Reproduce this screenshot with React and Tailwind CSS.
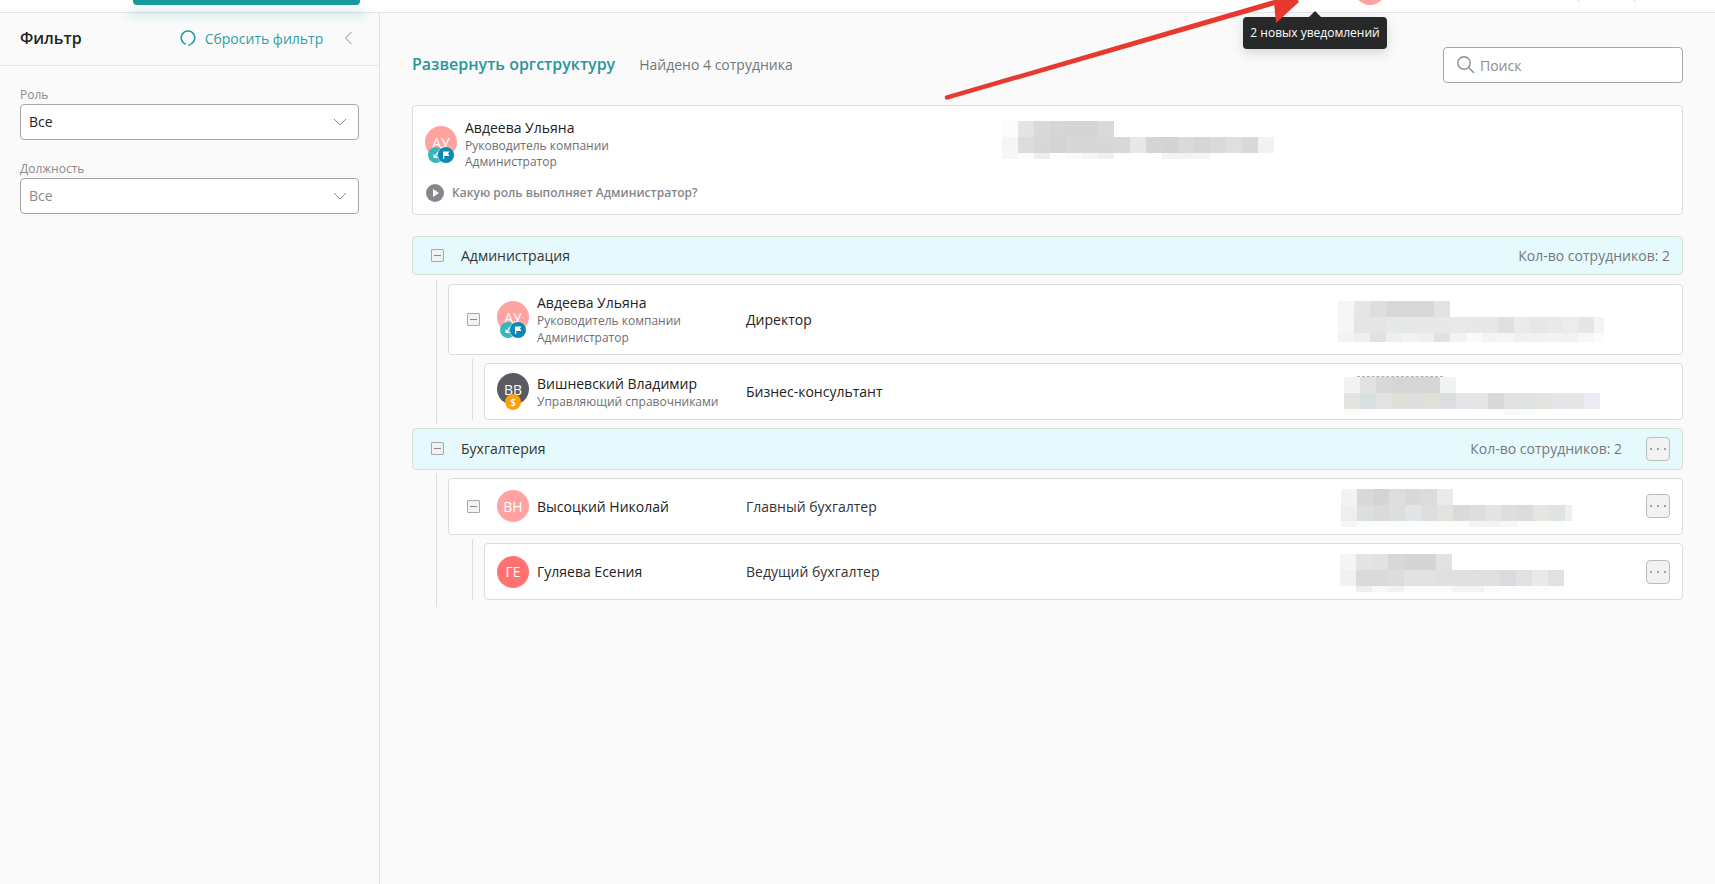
import React from "react";

const Minus = () => (
  <span className="flex h-[13px] w-[13px] shrink-0 items-center justify-center rounded-[1px] border border-[#a9a9a9] bg-[#f2f2f2]">
    <span className="h-px w-[7px] bg-[#8a8a8a]" />
  </span>
);

const Dots = () => (
  <span className="flex h-[24px] w-[24px] shrink-0 items-center justify-center gap-[5px] rounded border border-[#bdbdbd] bg-[#f2f2f2]">
    <span className="h-[2px] w-[2px] rounded-full bg-[#888]" />
    <span className="h-[2px] w-[2px] rounded-full bg-[#888]" />
    <span className="h-[2px] w-[2px] rounded-full bg-[#888]" />
  </span>
);

const Chevron = () => (
  <svg width="14" height="8" viewBox="0 0 14 8" fill="none" stroke="#8c8c8c" strokeWidth="1">
    <path d="M1 1l6 6 6-6" />
  </svg>
);

const TeamBadges = () => (
  <span className="absolute left-[3px] top-[21px] flex">
    <span className="flex h-[16px] w-[16px] items-center justify-center rounded-full bg-[#3ab5bd]">
      <svg width="10" height="10" viewBox="0 0 10 10" fill="#fff">
        <path d="M7.5 2.5L5 5.5 7 8H2.5V4l1.4 1.4 2.4-3.4z" />
      </svg>
    </span>
    <span className="-ml-[6px] flex h-[16px] w-[16px] items-center justify-center rounded-full bg-[#0d87b3] ring-1 ring-white/40">
      <svg width="10" height="10" viewBox="0 0 10 10" fill="#fff">
        <path d="M2 1.5h6.5L7 3.7l1.5 2.2H3.2V9H2z" />
      </svg>
    </span>
  </span>
);

const DollarBadge = () => (
  <span className="absolute left-[8px] top-[21px] flex h-[16px] w-[16px] items-center justify-center rounded-full bg-[#ff9f0a] text-[10px] font-semibold leading-none text-white">
    $
  </span>
);

const Avatar = ({ text, color, badge }) => (
  <span className={`relative flex h-[32px] w-[32px] shrink-0 items-center justify-center rounded-full text-[14px] text-white ${color}`}>
    {text}
    {badge === "team" && <TeamBadges />}
    {badge === "dollar" && <DollarBadge />}
  </span>
);

const Mosaic = ({ rows, className, width, thin = 6, children }) => (
  <div className={`flex flex-col overflow-hidden ${className}`} style={{ width }}>
    {children}
    {rows.map((r, i) => (
      <div key={i} className="flex shrink-0" style={{ height: r.thin ? thin : 16 }}>
        {r.cells.map((c, j) => (
          <span key={j} className="h-full w-[16px] shrink-0" style={{ backgroundColor: c }} />
        ))}
      </div>
    ))}
  </div>
);

const top1 = [
  { cells: ["#fcfcfb", "#e4e4e4", "#d9d9d9", "#d6d6d6", "#d4d5d4", "#d4d5d4", "#d9dada"] },
  { cells: ["#f6f6f5", "#dcdcdc", "#d8d6d8", "#d6d3d7", "#d9d6d8", "#d6d7d6", "#d7d7d7", "#d8d8d8", "#e8e8e8", "#d5d5d5", "#d3d3d3", "#dadada", "#d5d6d7", "#dadada", "#dde0e2", "#d9d9d9", "#f2f2f2"] },
  { thin: true, cells: ["#f5f7f7", "#fbfbfb", "#eeeeee", "#ffffff", "#fbfbf8", "#f4f6f5", "#eff0f0", "#ffffff", "#ffffff", "#ffffff", "#f4f4f4", "#f3f3f3", "#f6f6f6"] },
];
const m1 = [
  { cells: ["#f7f6f5", "#e6e6e4", "#dedede", "#d8d8d8", "#d8d8da", "#d8d8da", "#e3e3e5"] },
  { cells: ["#f7f6f5", "#e4e6e6", "#e5e5e3", "#e5e9e8", "#e6e9e7", "#e7e8e8", "#e6e8ea", "#eae9e8", "#e9e7e8", "#e6e7e7", "#dfe0e2", "#ebebec", "#e6e8e8", "#e8e9e8", "#edecea", "#e5e6e6", "#f3f4f5"] },
  { thin: true, cells: ["#f3f3f1", "#efefef", "#e1e1e1", "#eeeeee", "#f2f2f0", "#eef0f0", "#e2e2e2", "#f2f2f2", "#fbf9f9", "#f4f4f4", "#f4f5f4", "#eff0ef", "#f1f1f1", "#f3f3f2", "#f0f1f1", "#f7f7f7", "#fbfbfb"] },
];
const m2 = [
  { cells: ["#f3f3f3", "#e2e2e2", "#d8d8d8", "#d6d6d6", "#d6d6d6", "#d6d6d6", "#f1f3f3"] },
  { cells: ["#e4e5e1", "#d9dee1", "#e2e3e2", "#dddfd9", "#dcdee0", "#e0dfda", "#dcdee2", "#e6e4e8", "#e5e4e7", "#d8d8d8", "#e1e3e2", "#dfe3e1", "#e3e3e0", "#e6e5e9", "#e6e7e4", "#ebebf1"] },
  { thin: true, cells: ["#fbfbfb", "#ffffff", "#ffffff", "#ffffff", "#ffffff", "#ffffff", "#ffffff", "#ffffff", "#ffffff", "#ffffff", "#f8f8f8", "#fafafa"] },
];
const m3 = [
  { cells: ["#f3f3f3", "#d9d9d9", "#d4d4d4", "#dedede", "#d9d9d9", "#dcdcdc", "#ebebeb"] },
  { cells: ["#eeeeec", "#dbdfde", "#dcd9da", "#dcdfe0", "#e0e6e8", "#dfdedc", "#e3e3df", "#dadada", "#dddee0", "#e3e4e4", "#dddee0", "#dcdcde", "#e6e5e2", "#e0e3e3", "#ededf2"] },
  { thin: true, cells: ["#f6f6f6", "#fbfbfb", "#fbfbfb", "#fbfbfb", "#fcfcfc", "#fcfcfc", "#fcfcfc", "#fcfcfc", "#f4f4f5", "#f3f3f4", "#f7f7f9", "#fcfcfc", "#fcfcfc", "#fdfdfd"] },
];
const m4 = [
  { cells: ["#f4f5f4", "#e4e4e2", "#e2e2e2", "#d8d8d8", "#d5d5d5", "#d5d5d5", "#e1e2e4"] },
  { cells: ["#f0f1f0", "#dbd9da", "#dadada", "#dcdcdc", "#e0e2e4", "#e3e2df", "#dfe0e1", "#e0e0df", "#dfdfde", "#e0e0df", "#dadae0", "#e1e1e3", "#e8e9e9", "#e1e1e1"] },
  { thin: true, cells: ["#ffffff", "#efefef", "#f8f8f8", "#f3f3f3", "#fbfbfb", "#fbfbfb", "#fbfbfb", "#f4f4f4", "#f3f3f5", "#fbfbfb", "#fcfcfc", "#fcfcfc", "#fcfcfc", "#fdfdfd"] },
];

const Person = ({ name, subs, lastCls = "leading-[17px]" }) => (
  <div className="flex flex-col">
    <span className="text-[14px] leading-[19px] text-[#222]">{name}</span>
    {subs.map((s, i) => (
      <span key={s} className={`text-[12px] text-[#6e6e73] ${i === subs.length - 1 ? lastCls : "leading-[17px]"}`}>{s}</span>
    ))}
  </div>
);

const GroupHead = ({ title, heightCls, withDots }) => (
  <div className={`flex items-center rounded border border-[#d9dddd] bg-[#e6fafe] pl-[18px] pr-[12px] ${heightCls}`}>
    <Minus />
    <span className="ml-[17px] text-[14px] text-[#333]">{title}</span>
    <span className={`ml-auto text-[14px] text-[#77787c] ${withDots ? "mr-[24px]" : ""}`}>Кол-во сотрудников: 2</span>
    {withDots && <Dots />}
  </div>
);

export default function App() {
  return (
    <div className="relative flex h-[884px] w-full flex-col overflow-hidden bg-[#fafafa] font-['Open_Sans',sans-serif]">
      <header className="flex h-[13px] shrink-0 items-start overflow-hidden border-b border-[#e4e4e4] bg-white">
        <div className="ml-[133px] h-[5px] w-[227px] rounded-b bg-[#179a9c]" />
        <div className="ml-[994px] -mt-[27px] h-[32px] w-[32px] shrink-0 rounded-full bg-[#ffa3a1]" />
        <div className="ml-[192px] h-[2px] w-px bg-[#dcdcdc]" />
        <div className="ml-[55px] h-[2px] w-px bg-[#dcdcdc]" />
      </header>
      <div className="h-0 shrink-0">
        <div className="ml-[128px] h-[8px] w-[237px] -translate-y-[4px] bg-[#179a9c]/15 blur-[4px]" />
      </div>

      <div className="flex min-h-0 flex-1">
        <aside className="w-[380px] shrink-0 border-r border-[#e0e0e0]">
          <div className="flex h-[53px] items-center border-b border-[#e6e6e6] pb-[2px] pl-[20px] pr-[24px]">
            <span className="text-[16px] font-semibold text-[#222]">Фильтр</span>
            <svg className="ml-[98px]" width="16" height="16" viewBox="0 0 16 16" fill="none" stroke="#1f9aa5" strokeWidth="1.6">
              <path d="M10.4 14.2A6.8 6.8 0 1 0 5.6 14.2" />
              <path d="M8.4 14.6l1.8 1" />
            </svg>
            <span className="ml-[9px] text-[14px] text-[#2d9fa8]">Сбросить фильтр</span>
            <svg className="ml-[21px]" width="9" height="14" viewBox="0 0 9 14" fill="none" stroke="#8c8c8c" strokeWidth="1">
              <path d="M7.5 1L1.5 7l6 6" />
            </svg>
          </div>
          <div className="pl-[20px] pr-[20px] pt-[20px]">
            <div className="text-[12px] leading-[18px] text-[#8a8a8a]">Роль</div>
            <div className="flex h-[36px] items-center justify-between rounded border border-[#a6a6a6] bg-white pl-[8px] pr-[11px]">
              <span className="mb-[2px] text-[14px] text-[#222]">Все</span>
              <Chevron />
            </div>
            <div className="mt-[20px] text-[12px] leading-[18px] text-[#8a8a8a]">Должность</div>
            <div className="flex h-[36px] items-center justify-between rounded border border-[#a6a6a6] bg-white pl-[8px] pr-[11px]">
              <span className="mb-[2px] text-[14px] text-[#8a8a8a]">Все</span>
              <Chevron />
            </div>
          </div>
        </aside>

        <main className="min-w-0 flex-1 pl-[32px] pr-[32px] pt-[34px]">
          <div className="flex h-[36px] items-center">
            <span className="mb-[2px] text-[16px] font-semibold text-[#2a969c]">Развернуть оргструктуру</span>
            <span className="mb-[2px] ml-[24px] text-[14px] text-[#74767a]">Найдено 4 сотрудника</span>
            <div className="ml-auto flex h-[36px] w-[240px] items-center rounded border border-[#a6a6a6] bg-white pl-[12px]">
              <svg width="20" height="20" viewBox="0 0 20 20" fill="none" stroke="#8c8c8c" strokeWidth="1.4">
                <circle cx="8" cy="8" r="6.2" />
                <path d="M12.6 12.6L18 18" />
              </svg>
              <span className="ml-[4px] text-[14px] text-[#8c8c8c]">Поиск</span>
            </div>
          </div>

          <div className="mt-[22px] flex h-[110px] rounded border border-[#dcdcdc] bg-white pl-[12px] pt-[12px]">
            <div className="flex w-[577px] shrink-0 flex-col">
              <div className="flex">
                <div className="mt-[8px]">
                  <Avatar text="АУ" color="bg-[#ffa3a1]" badge="team" />
                </div>
                <div className="ml-[8px]">
                  <Person name="Авдеева Ульяна" subs={["Руководитель компании", "Администратор"]} lastCls="leading-[16px]" />
                </div>
              </div>
              <div className="mt-[14px] flex items-center">
                <span className="ml-[1px] flex h-[18px] w-[18px] items-center justify-center rounded-full bg-[#85878c]">
                  <span className="ml-[1px] h-0 w-0 border-y-[4px] border-l-[6px] border-y-transparent border-l-white" />
                </span>
                <span className="ml-[8px] text-[12px] font-semibold text-[#85878c]">Какую роль выполняет Администратор?</span>
              </div>
            </div>
            <Mosaic rows={top1} className="mt-[3px]" width={272} />
          </div>

          <div className="mt-[21px]">
            <GroupHead title="Администрация" heightCls="h-[39px]" />
            <div className="ml-[24px] mt-[5px] border-l border-[#dcdcdc] pb-[4px] pl-[11px] pt-[4px]">
              <div className="flex h-[71px] items-center rounded border border-[#dcdcdc] bg-white pl-[18px]">
                <span className="flex w-[30px] shrink-0"><Minus /></span>
                <span className="mb-[5px] w-[40px] shrink-0"><Avatar text="АУ" color="bg-[#ffa3a1]" badge="team" /></span>
                <span className="w-[209px] shrink-0"><Person name="Авдеева Ульяна" subs={["Руководитель компании", "Администратор"]} /></span>
                <span className="w-[592px] shrink-0 text-[14px] text-[#222]">Директор</span>
                <Mosaic rows={m1} className="mt-[3px]" width={266} thin={9} />
              </div>
              <div className="ml-[24px] mt-[4px] border-l border-[#dcdcdc] pl-[11px] pt-[4px]">
                <div className="flex h-[57px] items-center rounded border border-[#dcdcdc] bg-white pl-[12px]">
                  <span className="mb-[5px] w-[40px] shrink-0"><Avatar text="ВВ" color="bg-[#5a5b60]" badge="dollar" /></span>
                  <span className="w-[209px] shrink-0"><Person name="Вишневский Владимир" subs={["Управляющий справочниками"]} /></span>
                  <span className="w-[598px] shrink-0 text-[14px] text-[#222]">Бизнес-консультант</span>
                  <Mosaic rows={m2} className="mt-[8px]" width={256}>
                    <div className="ml-[13px] h-px w-[86px] shrink-0 border-t border-dashed border-[#b0b0b0]" />
                  </Mosaic>
                </div>
              </div>
            </div>
          </div>

          <div className="mt-[4px]">
            <GroupHead title="Бухгалтерия" heightCls="h-[42px] pb-[1px]" withDots />
            <div className="ml-[24px] mt-[4px] border-l border-[#dcdcdc] pb-[7px] pl-[11px] pt-[4px]">
              <div className="flex h-[57px] items-center rounded border border-[#dcdcdc] bg-white pb-[1px] pl-[18px] pr-[12px]">
                <span className="flex w-[30px] shrink-0"><Minus /></span>
                <span className="w-[40px] shrink-0"><Avatar text="ВН" color="bg-[#ffa3a1]" /></span>
                <span className="w-[209px] shrink-0"><Person name="Высоцкий Николай" subs={[]} /></span>
                <span className="w-[595px] shrink-0 text-[14px] text-[#333]">Главный бухгалтер</span>
                <Mosaic rows={m3} className="mt-[3px]" width={231} />
                <span className="ml-auto"><Dots /></span>
              </div>
              <div className="ml-[24px] mt-[4px] border-l border-[#dcdcdc] pl-[11px] pt-[4px]">
                <div className="flex h-[57px] items-center rounded border border-[#dcdcdc] bg-white pl-[12px] pr-[12px]">
                  <span className="w-[40px] shrink-0"><Avatar text="ГЕ" color="bg-[#ff7270]" /></span>
                  <span className="w-[209px] shrink-0"><Person name="Гуляева Есения" subs={[]} /></span>
                  <span className="w-[594px] shrink-0 text-[14px] text-[#333]">Ведущий бухгалтер</span>
                  <Mosaic rows={m4} className="mt-[3px]" width={224} />
                  <span className="ml-auto"><Dots /></span>
                </div>
              </div>
            </div>
          </div>
        </main>
      </div>

      <div className="absolute left-[1243px] top-[17px] flex h-[32px] w-[144px] items-center justify-center rounded bg-[#26282a] text-[12px] text-white shadow-[0_4px_12px_rgba(0,0,0,0.15)]">
        <span className="absolute left-[66px] -top-[6px] h-0 w-0 border-x-[6px] border-b-[6px] border-x-transparent border-b-[#26282a]" />
        2 новых уведомлений
      </div>

      <svg className="pointer-events-none absolute left-0 top-0" width="1715" height="110" viewBox="0 0 1715 110" fill="#e8392e">
        <path d="M946 95.5L1281 -2l1.5 5L948 99.5a2 2 0 0 1-2-4z" />
        <path d="M1299 2L1276 23l-3-30 20 0z" />
      </svg>
    </div>
  );
}
